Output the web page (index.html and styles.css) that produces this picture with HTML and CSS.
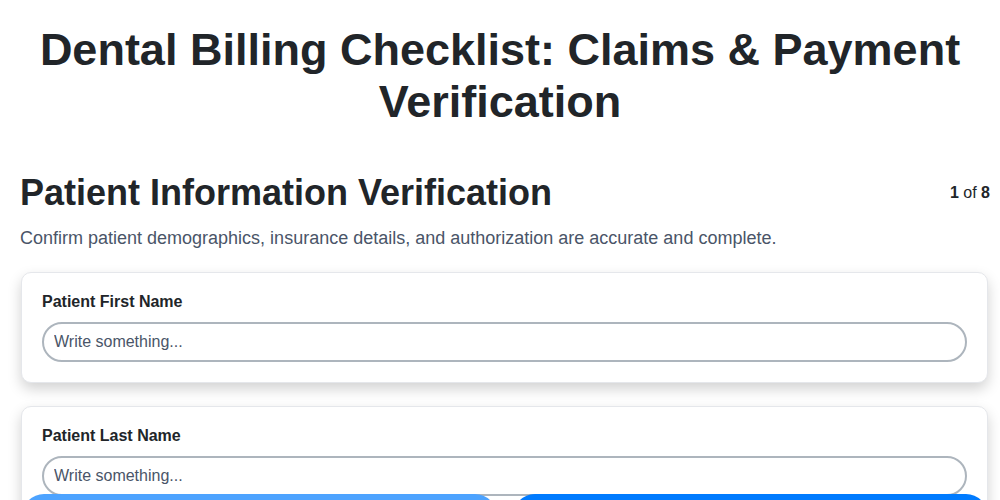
FILE: index.html
```html
<!DOCTYPE html>
<html lang="en">
<head>
<meta charset="utf-8">
<title>Dental Billing Checklist</title>
<link rel="stylesheet" href="styles.css">
</head>
<body>
<h1 class="page-title">Dental Billing Checklist: Claims &amp; Payment Verification</h1>
<main class="step">
  <div class="step-head">
    <h2 class="step-title">Patient Information Verification</h2>
    <div class="step-count"><b>1</b> of <b>8</b></div>
  </div>
  <p class="step-desc">Confirm patient demographics, insurance details, and authorization are accurate and complete.</p>
  <div class="cards">
    <div class="card">
      <label class="field-label" for="f1">Patient First Name</label>
      <input class="field-input" id="f1" type="text" placeholder="Write something...">
    </div>
    <div class="card">
      <label class="field-label" for="f2">Patient Last Name</label>
      <input class="field-input" id="f2" type="text" placeholder="Write something...">
    </div>
    <div class="card">
      <label class="field-label" for="f3">Date of Birth</label>
      <input class="field-input" id="f3" type="text" placeholder="Write something...">
    </div>
  </div>
</main>
<nav class="nav-bar">
  <button class="btn btn-prev" type="button">Previous</button>
  <button class="btn btn-next" type="button">Next</button>
</nav>
</body>
</html>
```
FILE: styles.css
```css
* { box-sizing: border-box; }
html, body { margin: 0; padding: 0; }
body {
  font-family: "Liberation Sans", Arial, Helvetica, sans-serif;
  color: #212529;
  background: #fff;
  overflow: hidden;
}
.page-title {
  margin: 24px 20px 0;
  text-align: center;
  font-size: 45px;
  line-height: 52px;
  font-weight: 700;
  color: #212529;
}
.step {
  padding: 43px 10px 0 20px;
}
.step-head {
  display: flex;
  justify-content: space-between;
  align-items: center;
}
.step-title {
  margin: 0;
  font-size: 36px;
  line-height: 44px;
  font-weight: 700;
  color: #212529;
}
.step-count {
  font-size: 16px;
  line-height: 20px;
  color: #212529;
}
.step-desc {
  margin: 11px 0 22px;
  font-size: 18px;
  line-height: 24px;
  color: #4a5568;
}
.cards {
  display: flex;
  flex-direction: column;
  gap: 23px;
  padding: 0 1px;
  margin-right: 1px;
}
.card {
  background: #fff;
  border: 1px solid #e5e7eb;
  border-radius: 10px;
  box-shadow: 0 6px 14px rgba(0, 0, 0, 0.18);
  padding: 19px 20px 20px;
  display: flex;
  flex-direction: column;
  gap: 10px;
}
.field-label {
  font-size: 16px;
  line-height: 20px;
  font-weight: 700;
  color: #212529;
}
.field-input {
  height: 40px;
  border: 2px solid #adb5bd;
  border-radius: 20px;
  padding: 0 10px;
  font-family: inherit;
  font-size: 16px;
  color: #212529;
  background: #fff;
  outline: none;
}
.field-input::placeholder { color: #4a5568; opacity: 1; }
.nav-bar {
  position: fixed;
  left: 22px;
  right: 12px;
  top: 494px;
  display: flex;
  gap: 16px;
}
.btn {
  flex: 1;
  height: 60px;
  border: none;
  border-radius: 22px;
  color: #fff;
  font-family: inherit;
  font-size: 16px;
  font-weight: 700;
}
.btn-prev { background: #4da3ff; }
.btn-next { background: #007bff; }
```
